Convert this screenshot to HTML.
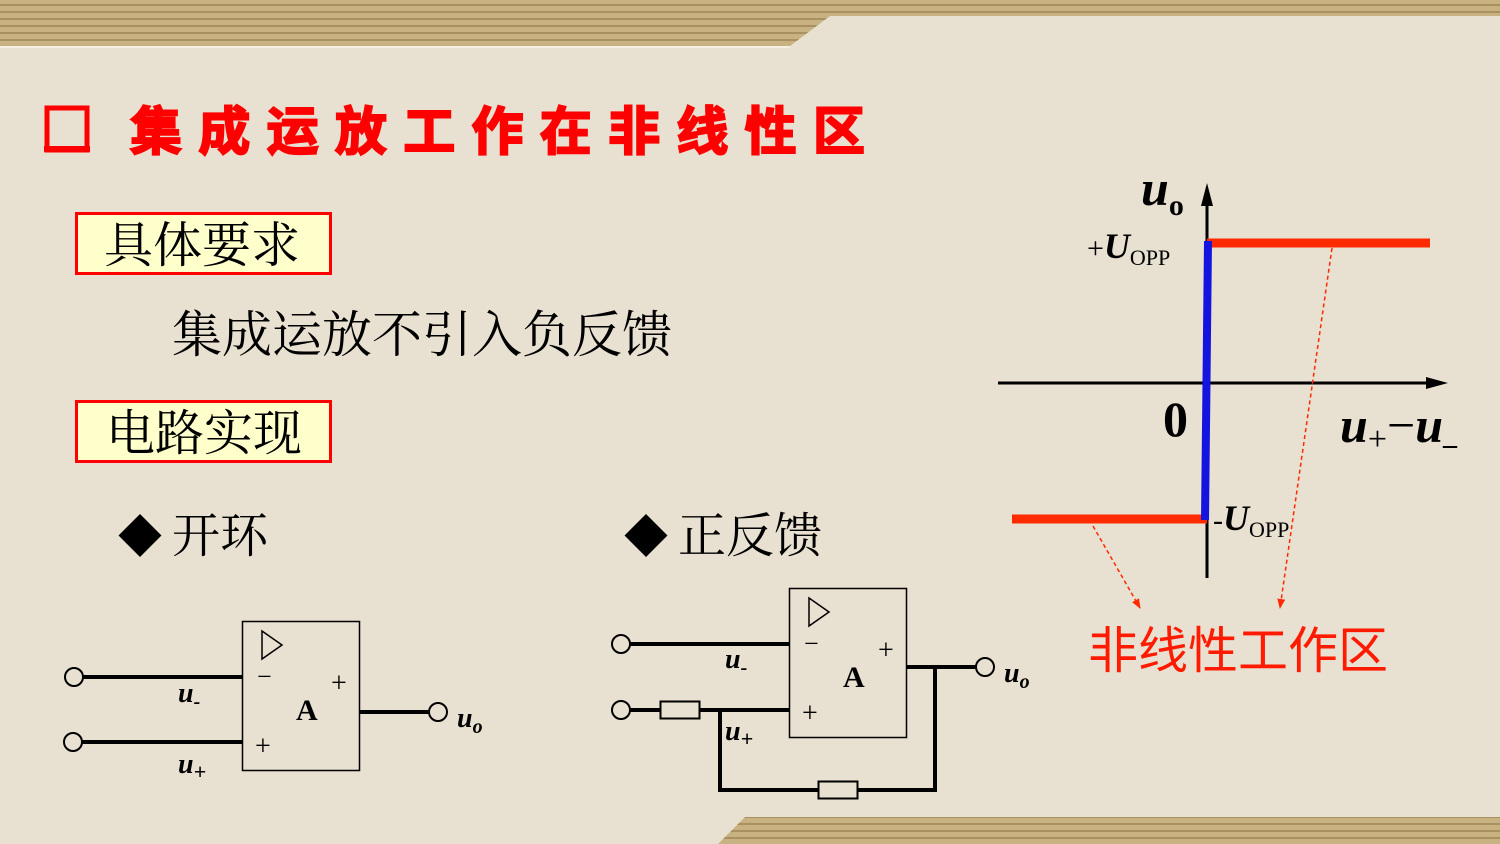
<!DOCTYPE html>
<html><head><meta charset="utf-8"><style>
html,body{margin:0;padding:0;width:1500px;height:844px;overflow:hidden;background:#e8e0d0}
svg{display:block}
.cn{font-family:"Liberation Serif","Noto Serif CJK SC",serif}
.cs{font-family:"Liberation Sans","Noto Sans CJK SC",sans-serif}
.it{font-family:"Liberation Serif",serif;font-style:italic;font-weight:bold}
.rm{font-family:"Liberation Serif",serif}
</style></head><body>
<svg width="1500" height="844" viewBox="0 0 1500 844" xmlns="http://www.w3.org/2000/svg">
<defs>
<pattern id="st" width="10" height="7" patternUnits="userSpaceOnUse">
<rect width="10" height="7" fill="#c8b282"/><rect y="4" width="10" height="2" fill="#a89060"/>
</pattern>
<marker id="ar" markerWidth="10" markerHeight="10" refX="9" refY="5" orient="auto" markerUnits="userSpaceOnUse"><path d="M0,1 L10,5 L0,9 Z" fill="#ff2a00"/></marker>
</defs>
<rect width="1500" height="844" fill="#e8e0d0"/>
<polygon points="0,0 1500,0 1500,16 830,16 790,46 0,46" fill="url(#st)"/>
<rect x="0" y="46" width="790" height="2" fill="#f6f0e4"/>
<polygon points="745,817 1500,817 1500,844 718,844" fill="url(#st)"/>

<!-- title -->
<rect x="47" y="108" width="40" height="42" fill="none" stroke="#f00" stroke-width="5"/>
<rect x="44" y="146" width="46" height="6" fill="#f00"/>
<text x="130" y="150" class="cs" font-size="52" font-weight="bold" fill="#f00" textLength="735" lengthAdjust="spacing" stroke="#f00" stroke-width="2">集成运放工作在非线性区</text>

<rect x="76.5" y="213.5" width="254" height="60" fill="#ffffcc" stroke="#f00" stroke-width="3"/>
<text x="104" y="262" class="cn" font-size="49">具体要求</text>
<text x="172" y="352" class="cn" font-size="50">集成运放不引入负反馈</text>
<rect x="76.5" y="401.5" width="254" height="60" fill="#ffffcc" stroke="#f00" stroke-width="3"/>
<text x="106" y="450" class="cn" font-size="49">电路实现</text>

<text x="118" y="552" class="cn" font-size="44">◆</text>
<text x="172" y="552" class="cn" font-size="48">开环</text>
<text x="624" y="552" class="cn" font-size="44">◆</text>
<text x="678" y="552" class="cn" font-size="48">正反馈</text>

<!-- circuit 1 -->
<g stroke="#000" fill="none">
<rect x="242.5" y="621.5" width="117" height="149" stroke-width="1.5"/>
<path d="M262,631 L282,645 L262,659 Z" stroke-width="1.5"/>
<line x1="83" y1="677" x2="242" y2="677" stroke-width="4"/>
<line x1="82" y1="742" x2="242" y2="742" stroke-width="4"/>
<line x1="360" y1="712" x2="429" y2="712" stroke-width="4"/>
<circle cx="74" cy="677" r="9" stroke-width="2"/>
<circle cx="73" cy="742" r="9" stroke-width="2"/>
<circle cx="438" cy="712" r="9" stroke-width="2"/>
</g>
<text x="257" y="685" class="rm" font-size="26">−</text>
<text x="331" y="692" class="rm" font-size="28">+</text>
<text x="296" y="720" class="rm" font-size="30" font-weight="bold">A</text>
<text x="255" y="755" class="rm" font-size="28">+</text>
<text x="178" y="702" class="it" font-size="28">u<tspan font-size="20" dy="6">-</tspan></text>
<text x="178" y="773" class="it" font-size="28">u<tspan font-size="22" dy="6">+</tspan></text>
<text x="457" y="727" class="it" font-size="28">u<tspan font-size="20" dy="6">o</tspan></text>

<!-- circuit 2 -->
<g stroke="#000" fill="none">
<rect x="789.5" y="588.5" width="117" height="149" stroke-width="1.5"/>
<path d="M809,598 L829,612 L809,626 Z" stroke-width="1.5"/>
<line x1="630" y1="644" x2="789" y2="644" stroke-width="4"/>
<line x1="630" y1="710" x2="660" y2="710" stroke-width="4"/>
<line x1="700" y1="710" x2="789" y2="710" stroke-width="4"/>
<line x1="907" y1="667" x2="976" y2="667" stroke-width="4"/>
<polyline points="935,667 935,790 720,790 720,710" stroke-width="4"/>
<circle cx="621" cy="644" r="9" stroke-width="2"/>
<circle cx="621" cy="710" r="9" stroke-width="2"/>
<circle cx="985" cy="667" r="9" stroke-width="2"/>
</g>
<rect x="660.5" y="701.5" width="39" height="17" fill="#e8e0d0" stroke="#000" stroke-width="2"/>
<rect x="818.5" y="781.5" width="39" height="17" fill="#e8e0d0" stroke="#000" stroke-width="2"/>
<text x="804" y="652" class="rm" font-size="26">−</text>
<text x="878" y="659" class="rm" font-size="28">+</text>
<text x="843" y="687" class="rm" font-size="30" font-weight="bold">A</text>
<text x="802" y="722" class="rm" font-size="28">+</text>
<text x="725" y="668" class="it" font-size="28">u<tspan font-size="20" dy="6">-</tspan></text>
<text x="725" y="740" class="it" font-size="28">u<tspan font-size="22" dy="6">+</tspan></text>
<text x="1004" y="682" class="it" font-size="28">u<tspan font-size="20" dy="6">o</tspan></text>

<!-- graph -->
<line x1="1207" y1="578" x2="1207" y2="200" stroke="#000" stroke-width="3"/>
<path d="M1207,183 L1213,206 L1201,206 Z" fill="#000"/>
<line x1="998" y1="383" x2="1428" y2="383" stroke="#000" stroke-width="3"/>
<path d="M1448,383 L1426,377 L1426,389 Z" fill="#000"/>
<line x1="1207" y1="243" x2="1430" y2="243" stroke="#ff2a00" stroke-width="9"/>
<line x1="1012" y1="519" x2="1207" y2="519" stroke="#ff2a00" stroke-width="9"/>
<line x1="1208" y1="241" x2="1205" y2="520" stroke="#1414e0" stroke-width="8"/>
<line x1="1332" y1="248" x2="1280" y2="608" stroke="#ff2a00" stroke-width="1.5" stroke-dasharray="4,3" marker-end="url(#ar)"/>
<line x1="1093" y1="526" x2="1140" y2="608" stroke="#ff2a00" stroke-width="1.5" stroke-dasharray="4,3" marker-end="url(#ar)"/>
<text x="1141" y="205" class="it" font-size="50">u<tspan font-size="30" dy="10" font-style="normal">o</tspan></text>
<text x="1087" y="258" class="rm" font-size="30">+<tspan font-style="italic" font-weight="bold" font-size="36">U</tspan><tspan font-size="22" dy="7">OPP</tspan></text>
<text x="1163" y="436" class="rm" font-size="50" font-weight="bold">0</text>
<text x="1340" y="442" class="it" font-size="50">u<tspan font-size="34" dy="8" font-style="normal" font-weight="normal">+</tspan><tspan dy="-8" font-style="normal" font-weight="normal">−</tspan>u<tspan font-size="28" dy="2" font-style="normal">_</tspan></text>
<text x="1213" y="530" class="rm" font-size="30">-<tspan font-style="italic" font-weight="bold" font-size="36">U</tspan><tspan font-size="22" dy="7">OPP</tspan></text>
<text x="1088" y="668" class="cs" font-size="50" fill="#ff1a00">非线性工作区</text>
</svg>
</body></html>
